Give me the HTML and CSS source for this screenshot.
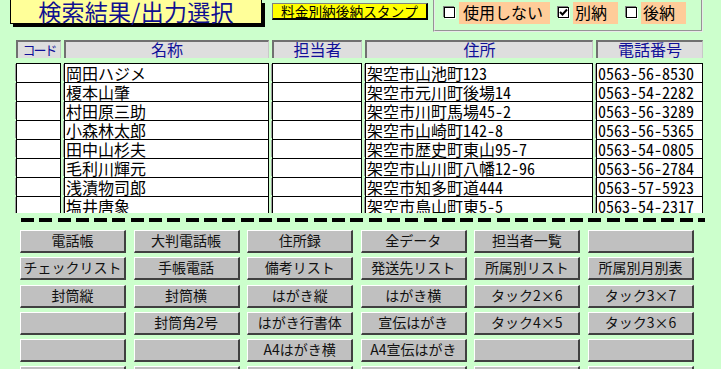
FILE: index.html
```html
<!DOCTYPE html>
<html lang="ja">
<head>
  <meta charset="UTF-8" />
  <title>検索結果/出力選択</title>
  <link rel="stylesheet" href="styles.css">
</head>
<body>
  <div class="top-bar">
    <div class="title">検索結果/出力選択</div>
    <div class="stamp-btn">料金別納後納スタンプ</div>
    <div class="option-frame">
      <span class="check"></span>
      <span class="opt-label opt-wide">使用しない</span>
      <span class="check check-on">
        <svg width="9" height="9" viewBox="0 0 9 9"><path d="M1 4 L3.5 6.5 L8 1.5" fill="none" stroke="#000" stroke-width="2"/></svg>
      </span>
      <span class="opt-label">別納</span>
      <span class="check"></span>
      <span class="opt-label">後納</span>
    </div>
  </div>

  <div class="list-head">
    <div class="head-cell head-code">コード</div>
    <div class="head-cell">名称</div>
    <div class="head-cell">担当者</div>
    <div class="head-cell">住所</div>
    <div class="head-cell">電話番号</div>
  </div>

  <div class="list-body">
    <div class="list-row"><div class="cell"></div><div class="cell">岡田ハジメ</div><div class="cell"></div><div class="cell">架空市山池町123</div><div class="cell">0563-56-8530</div></div>
    <div class="list-row"><div class="cell"></div><div class="cell">榎本山肇</div><div class="cell"></div><div class="cell">架空市元川町後場14</div><div class="cell">0563-54-2282</div></div>
    <div class="list-row"><div class="cell"></div><div class="cell">村田原三助</div><div class="cell"></div><div class="cell">架空市川町馬場45-2</div><div class="cell">0563-56-3289</div></div>
    <div class="list-row"><div class="cell"></div><div class="cell">小森林太郎</div><div class="cell"></div><div class="cell">架空市山崎町142-8</div><div class="cell">0563-56-5365</div></div>
    <div class="list-row"><div class="cell"></div><div class="cell">田中山杉夫</div><div class="cell"></div><div class="cell">架空市歴史町東山95-7</div><div class="cell">0563-54-0805</div></div>
    <div class="list-row"><div class="cell"></div><div class="cell">毛利川輝元</div><div class="cell"></div><div class="cell">架空市山川町八幡12-96</div><div class="cell">0563-56-2784</div></div>
    <div class="list-row"><div class="cell"></div><div class="cell">浅漬物司郎</div><div class="cell"></div><div class="cell">架空市知多町道444</div><div class="cell">0563-57-5923</div></div>
    <div class="list-row"><div class="cell"></div><div class="cell">塩井唐象</div><div class="cell"></div><div class="cell">架空市鳥山町東5-5</div><div class="cell">0563-54-2317</div></div>
  </div>

  <div class="dash-line"></div>

  <div class="btn-grid">
    <div class="btn">電話帳</div>
    <div class="btn">大判電話帳</div>
    <div class="btn">住所録</div>
    <div class="btn">全データ</div>
    <div class="btn">担当者一覧</div>
    <div class="btn"></div>

    <div class="btn">チェックリスト</div>
    <div class="btn">手帳電話</div>
    <div class="btn">備考リスト</div>
    <div class="btn">発送先リスト</div>
    <div class="btn">所属別リスト</div>
    <div class="btn">所属別月別表</div>

    <div class="btn">封筒縦</div>
    <div class="btn">封筒横</div>
    <div class="btn">はがき縦</div>
    <div class="btn">はがき横</div>
    <div class="btn">タック2×6</div>
    <div class="btn">タック3×7</div>

    <div class="btn"></div>
    <div class="btn">封筒角2号</div>
    <div class="btn">はがき行書体</div>
    <div class="btn">宣伝はがき</div>
    <div class="btn">タック4×5</div>
    <div class="btn">タック3×6</div>

    <div class="btn"></div>
    <div class="btn"></div>
    <div class="btn">A4はがき横</div>
    <div class="btn">A4宣伝はがき</div>
    <div class="btn"></div>
    <div class="btn"></div>

    <div class="btn"></div>
    <div class="btn"></div>
    <div class="btn"></div>
    <div class="btn"></div>
    <div class="btn"></div>
    <div class="btn"></div>
  </div>
</body>
</html>
```

FILE: styles.css
```css
 * {
   box-sizing: border-box;
 }

 body {
   margin: 0;
   width: 721px;
   height: 369px;
   overflow: hidden;
   background: #ccffcc;
   font-family: "Noto Sans Mono CJK JP", "Noto Sans CJK JP", sans-serif;
   color: #000;
 }

 .top-bar {
   display: flex;
   align-items: flex-start;
   height: 40px;
 }

 .title {
   margin-left: 10px;
   width: 252px;
   height: 24px;
   background: #ffff99;
   border: 1px solid #000;
   border-top: none;
   box-shadow: 3px 3px 0 #000;
   color: #101090;
   font-family: "Noto Sans CJK JP", sans-serif;
   font-size: 23px;
   line-height: 22px;
   letter-spacing: 0.3px;
   text-align: center;
 }

 .stamp-btn {
   margin-left: 10px;
   margin-top: 3px;
   width: 156px;
   height: 17px;
   background: #ffff00;
   border: 1px solid #808080;
   border-right: 2px solid #000;
   border-bottom: 2px solid #000;
   font-family: "Noto Sans Mono CJK JP", "Noto Sans CJK JP", sans-serif;
   font-size: 13.7px;
   line-height: 14px;
   text-align: center;
   white-space: nowrap;
 }

 .option-frame {
   margin-left: 5px;
   margin-top: -2px;
   width: 270px;
   height: 34px;
   border: 2px groove #e8e8e8;
   display: flex;
   align-items: flex-start;
   padding-left: 9px;
 }

 .check {
   width: 11px;
   height: 11px;
   margin-top: 7px;
   background: #fff;
   border: 1px solid #000;
   box-shadow: -1px -1px 0 #808080, 1px 1px 0 #fff;
   display: flex;
   align-items: center;
   justify-content: center;
 }

 .opt-label {
   margin-left: 4px;
   margin-right: 8px;
   margin-top: 2px;
   width: 45px;
   height: 22px;
   background: #ffcc99;
   font-family: "Noto Sans CJK JP", sans-serif;
   font-size: 16px;
   line-height: 20px;
   padding-left: 2px;
 }

 .opt-wide {
   width: 91px;
   padding-left: 4px;
 }

 .list-head,
 .list-row {
   display: grid;
   grid-template-columns: 45px 205px 90px 228px 107px;
   column-gap: 3px;
   padding-left: 16px;
 }

 .list-head {
   height: 18px;
 }

 .head-cell {
   background: #dedede;
   border-top: 2px solid #707070;
   border-left: 2px solid #707070;
   border-right: 1px solid #c8c8c8;
   color: #101098;
   font-family: "Noto Sans CJK JP", sans-serif;
   font-size: 16px;
   line-height: 15px;
   text-align: center;
   white-space: nowrap;
 }

 .head-code {
   font-size: 13px;
   letter-spacing: -2px;
 }

 .list-body {
   margin-top: 5px;
   height: 150px;
   overflow: hidden;
 }

 .list-row {
   height: 19px;
 }

 .cell {
   background: #fff;
   border: 1px solid #000;
   border-bottom: none;
   box-shadow: -2px 0 0 -1px #a0a0a0;
   font-size: 16px;
   line-height: 18px;
   padding-left: 1px;
   white-space: nowrap;
 }

 .dash-line {
   margin: 5px 0 0 21px;
   width: 684px;
   height: 4px;
   background: repeating-linear-gradient(to right, #000 0, #000 13px, transparent 13px, transparent 18.3px);
 }

 .btn-grid {
   margin-top: 8px;
   padding-left: 20px;
   height: 139px;
   overflow: hidden;
   display: grid;
   grid-template-columns: repeat(6, 106px);
   grid-auto-rows: 23px;
   column-gap: 7.6px;
   row-gap: 4.3px;
 }

 .btn {
   background: #c0c0c0;
   border-top: 1px solid #fff;
   border-left: 1px solid #fff;
   border-right: 2px solid #404040;
   border-bottom: 2px solid #404040;
   font-family: "Noto Sans CJK JP", sans-serif;
   font-size: 14px;
   line-height: 19px;
   text-align: center;
   color: #111;
   white-space: nowrap;
 }
```
